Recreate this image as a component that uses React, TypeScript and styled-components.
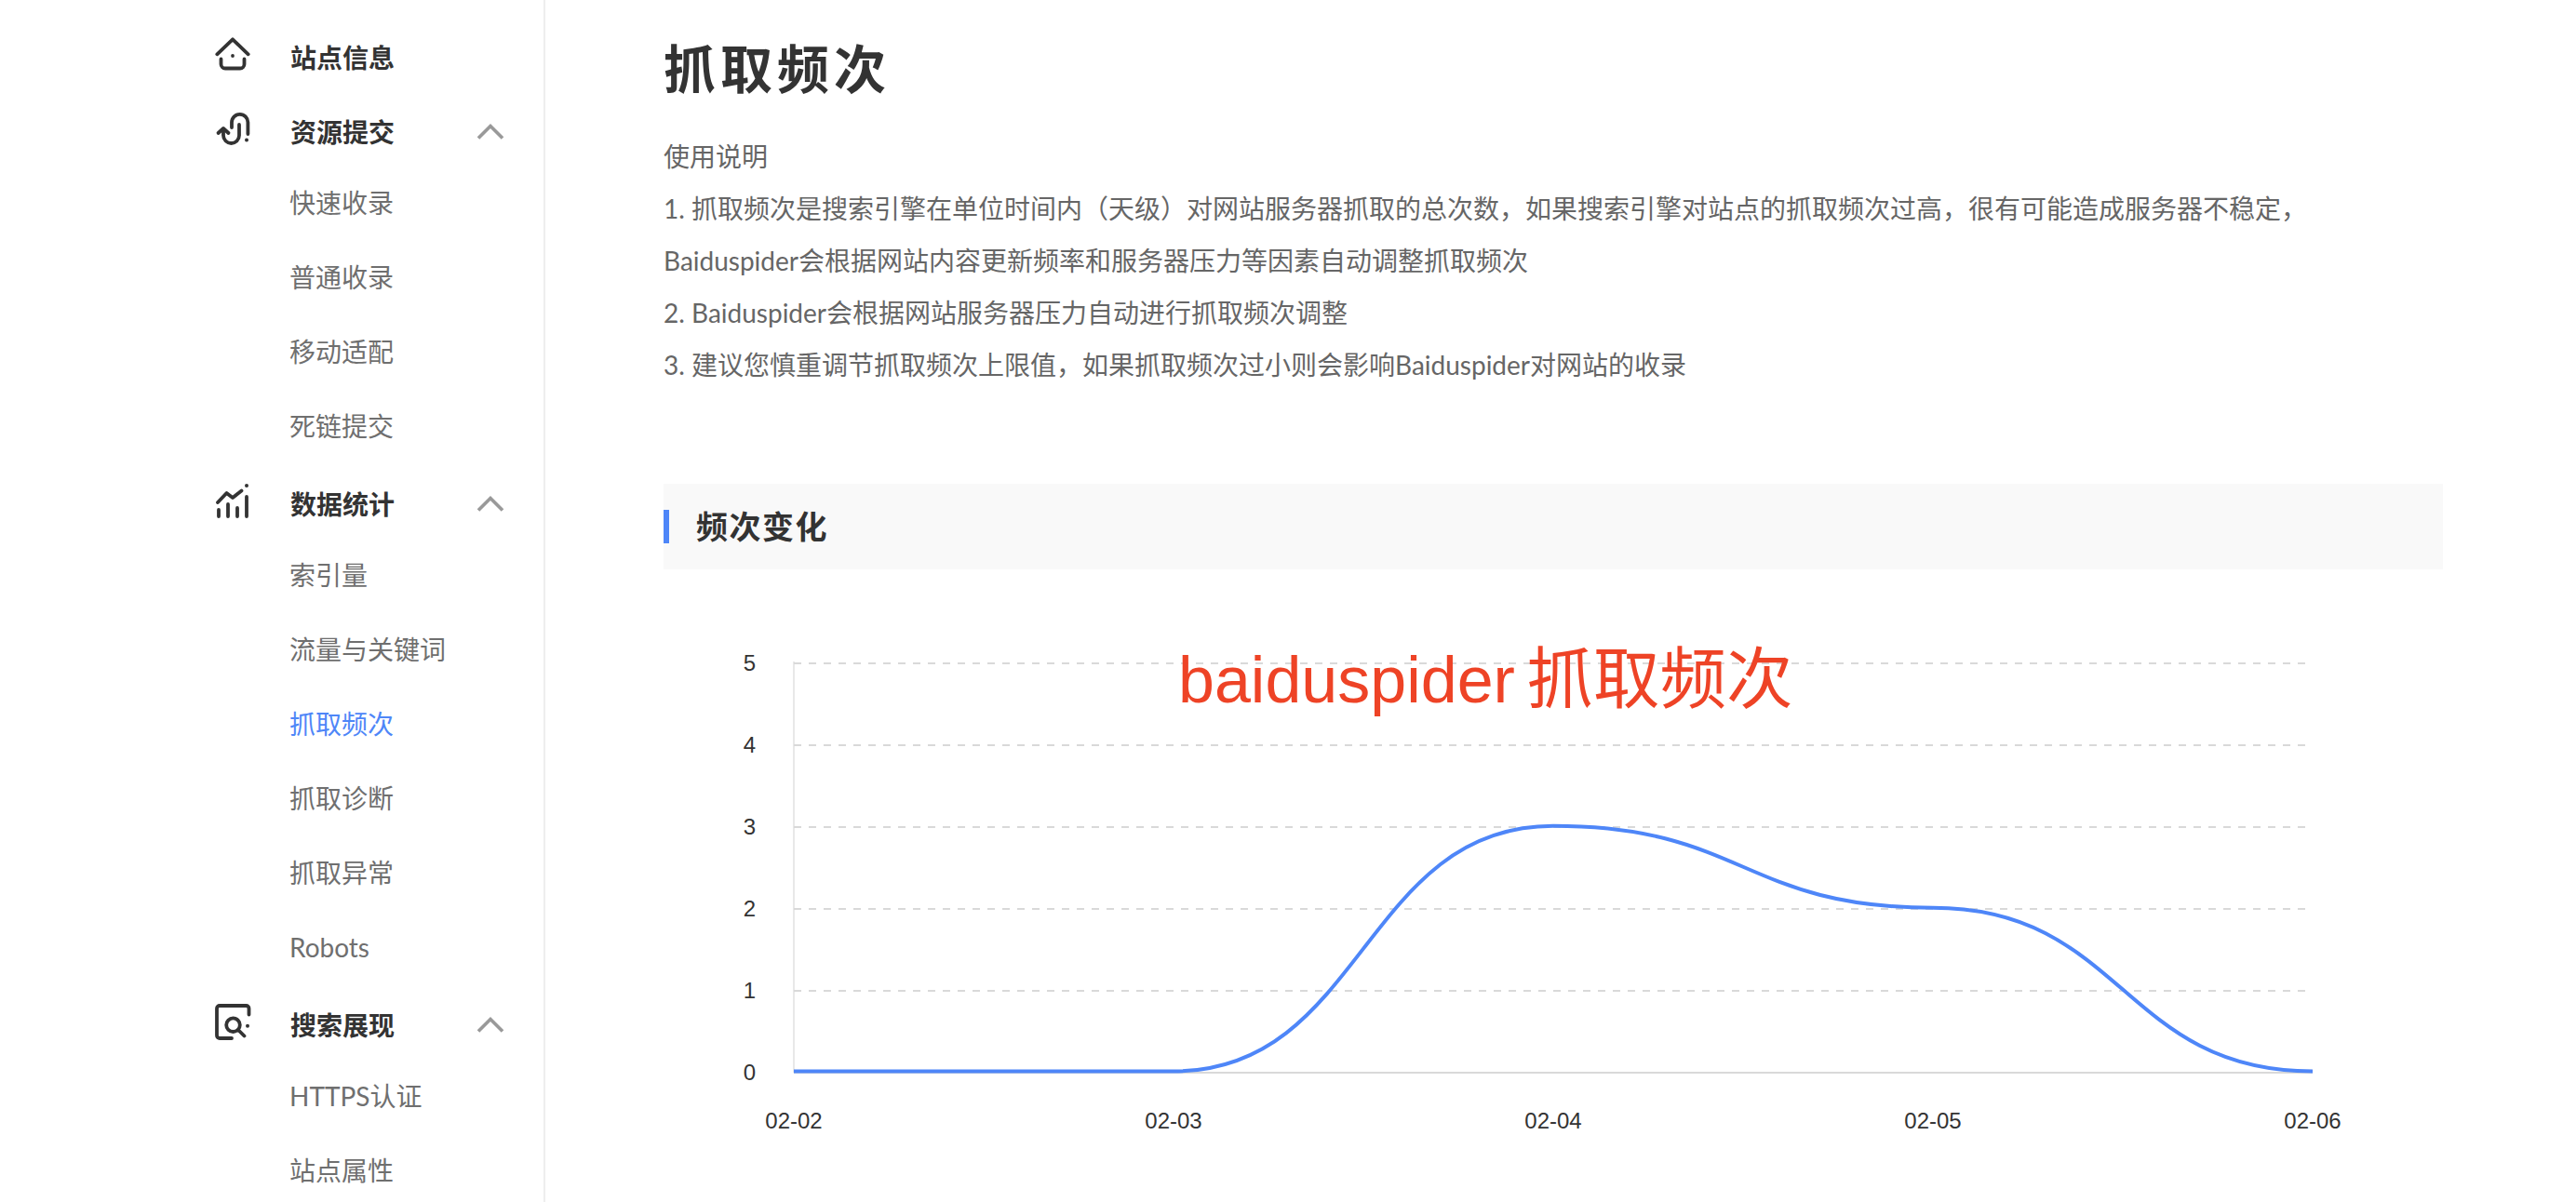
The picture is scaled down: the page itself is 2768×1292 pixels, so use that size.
import React from 'react';
import styled, { createGlobalStyle } from 'styled-components';

const GlobalStyle = createGlobalStyle`
  html, body {
    margin: 0;
    padding: 0;
    height: 1292px;
    overflow: hidden;
    background: #fff;
    font-family: "Noto Sans CJK SC", "Noto Sans", sans-serif;
  }
`;

const Page = styled.div`
  display: flex;
  width: 2768px;
  height: 1292px;
  overflow: hidden;
`;

const Sidebar = styled.nav`
  width: 584px;
  height: 1292px;
  flex-shrink: 0;
  border-right: 2px solid #eee;
`;

const Group = styled.div`
  margin-top: 8px;
  &:first-child {
    margin-top: 25px;
  }
`;

const GroupHead = styled.div`
  display: flex;
  align-items: center;
  height: 72px;
  padding-left: 225px;
  font-size: 28px;
  font-weight: 700;
  color: #333;
`;

const IconBox = styled.svg`
  width: 50px;
  height: 50px;
  margin: 0 37px 2px 0;
  fill: none;
  stroke: #333;
  stroke-width: 3.8;
  stroke-linecap: round;
  stroke-linejoin: round;
  flex-shrink: 0;
`;

const Chevron = styled.svg`
  width: 32px;
  height: 20px;
  margin-left: 87px;
  fill: none;
  stroke: #999;
  stroke-width: 3.6;
`;

const SubItem = styled.div<{ $active?: boolean }>`
  height: 80px;
  line-height: 83px;
  padding-left: 311px;
  font-family: Lato, "Noto Sans CJK SC", sans-serif;
  font-size: 28px;
  color: ${({ $active }) => ($active ? '#4e86f8' : '#6f6f6f')};
`;

const Main = styled.main`
  width: 1912px;
  margin-left: 127px;
  flex-shrink: 0;
`;

const Title = styled.h1`
  margin: 35px 0 33px;
  font-size: 56px;
  line-height: 72px;
  letter-spacing: 5px;
  font-weight: 700;
  color: #333;
`;

const Notes = styled.div`
  font-family: Lato, "Noto Sans CJK SC", sans-serif;
  font-size: 28px;
  line-height: 56px;
  color: #666;
`;

const Note = styled.p`
  margin: 0;
  white-space: nowrap;
`;

const SectionBar = styled.div`
  display: flex;
  align-items: center;
  height: 92px;
  margin-top: 100px;
  background: #f9f9f9;
`;

const SectionMark = styled.span`
  width: 6px;
  height: 36px;
  margin-right: 29px;
  background: #4e86f8;
`;

const SectionTitle = styled.h2`
  margin: 0 0 3px;
  font-size: 34px;
  letter-spacing: 1.5px;
  font-weight: 700;
  color: #333;
`;

const ChartWrap = styled.div`
  position: relative;
  height: 680px;
`;

const ChartSvg = styled.svg`
  display: block;
  width: 1912px;
  height: 680px;
`;

const AxisText = styled.text`
  font-family: "Liberation Sans", Arial, sans-serif;
  font-size: 24px;
  fill: #333;
`;

const Annotation = styled.div`
  position: absolute;
  left: 553px;
  top: 72px;
  font-family: "Liberation Sans", "Noto Sans CJK SC", sans-serif;
  font-size: 70px;
  line-height: 92px;
  word-spacing: -7px;
  color: #ee4326;
  white-space: nowrap;
`;

const AnnotationCjk = styled.span`
  font-size: 71.5px;
`;

const HomeIcon = () => (
  <IconBox viewBox="0 0 50 50">
    <path d="M8.3 23.3 25 7.3l16.7 16" />
    <path d="M12.5 28.5V34a4.5 4.5 0 0 0 4.5 4.5h16a4.5 4.5 0 0 0 4.5-4.5v-5.5" />
    <circle cx="25" cy="25" r="1.9" fill="#333" stroke="none" />
  </IconBox>
);

const SubmitIcon = () => (
  <IconBox viewBox="0 0 50 50">
    <path d="M9.5 28 15 23l5.5 5" />
    <path d="M15 24v6.5a8.5 8.5 0 0 0 17 0V19" />
    <path d="M24 22v-5.5a8.7 8.7 0 0 1 17.4 0V29" />
    <circle cx="40" cy="35.5" r="2" fill="#333" stroke="none" />
  </IconBox>
);

const StatsIcon = () => (
  <IconBox viewBox="0 0 50 50">
    <path d="M9 25 18.5 15 25 20l9.5-7.5" />
    <path d="M10 33v7M20 27v13M30 31v9M40 19v21" />
    <circle cx="40" cy="7" r="2" fill="#333" stroke="none" />
  </IconBox>
);

const SearchIcon = () => (
  <IconBox viewBox="0 0 50 50">
    <path d="M42.5 15.5V9a3 3 0 0 0-3-3H11a3 3 0 0 0-3 3v29a3 3 0 0 0 3 3h13" />
    <circle cx="25.5" cy="26.7" r="7.3" />
    <path d="m31 32 6.5 6.5" />
    <circle cx="41" cy="27.7" r="2" fill="#333" stroke="none" />
  </IconBox>
);

const ChevronUp = () => (
  <Chevron viewBox="0 0 32 20">
    <path d="M3 17.5 16 4.5l13 13" />
  </Chevron>
);

interface NavGroup {
  title: string;
  icon: React.ReactNode;
  items?: string[];
}

const navGroups: NavGroup[] = [
  { title: '站点信息', icon: <HomeIcon /> },
  { title: '资源提交', icon: <SubmitIcon />, items: ['快速收录', '普通收录', '移动适配', '死链提交'] },
  { title: '数据统计', icon: <StatsIcon />, items: ['索引量', '流量与关键词', '抓取频次', '抓取诊断', '抓取异常', 'Robots'] },
  { title: '搜索展现', icon: <SearchIcon />, items: ['HTTPS认证', '站点属性'] },
];

const notes = [
  '使用说明',
  '1. 抓取频次是搜索引擎在单位时间内（天级）对网站服务器抓取的总次数，如果搜索引擎对站点的抓取频次过高，很有可能造成服务器不稳定，',
  'Baiduspider会根据网站内容更新频率和服务器压力等因素自动调整抓取频次',
  '2. Baiduspider会根据网站服务器压力自动进行抓取频次调整',
  '3. 建议您慎重调节抓取频次上限值，如果抓取频次过小则会影响Baiduspider对网站的收录',
];

// chart geometry, in page pixels (the svg viewBox starts at the chart's page corner)
const X0 = 853;
const STEP_X = 408;
const Y0 = 1153;
const STEP_Y = 88;
const GRID_END = 2477;
const dates = ['02-02', '02-03', '02-04', '02-05', '02-06'];
const values = [0, 0, 3, 2, 0];

const px = (i: number) => X0 + i * STEP_X;
const py = (v: number) => Y0 - 1.5 - v * (STEP_Y - 0.1);

const curve = values.reduce((d, v, i) => {
  if (i === 0) return `M${px(0)} ${py(v)}`;
  const mid = px(i - 1) + STEP_X / 2;
  return `${d} C${mid} ${py(values[i - 1])} ${mid} ${py(v)} ${px(i)} ${py(v)}`;
}, '');

const Chart = () => (
  <ChartWrap>
    <ChartSvg viewBox="713 612 1912 680">
      <line x1={X0} y1={711} x2={X0} y2={Y0} stroke="#e8e8e8" strokeWidth="2" />
      {[1, 2, 3, 4, 5].map((v) => (
        <line
          key={v}
          x1={X0}
          y1={Y0 - v * STEP_Y}
          x2={GRID_END}
          y2={Y0 - v * STEP_Y}
          stroke="#d9d9d9"
          strokeWidth="2"
          strokeDasharray="8 8"
        />
      ))}
      <line x1={X0} y1={Y0} x2={px(4)} y2={Y0} stroke="#d9d9d9" strokeWidth="2" />
      {[0, 1, 2, 3, 4, 5].map((v) => (
        <AxisText key={v} x={812} y={Y0 - v * STEP_Y + 7.5} textAnchor="end">
          {v}
        </AxisText>
      ))}
      {dates.map((d, i) => (
        <AxisText key={d} x={px(i)} y={1213} textAnchor="middle">
          {d}
        </AxisText>
      ))}
      <path d={curve} fill="none" stroke="#4e86f8" strokeWidth="4" />
    </ChartSvg>
    <Annotation>
      baiduspider <AnnotationCjk>抓取频次</AnnotationCjk>
    </Annotation>
  </ChartWrap>
);

const App: React.FC = () => (
  <>
    <GlobalStyle />
    <Page>
      <Sidebar>
        {navGroups.map((group) => (
          <Group key={group.title}>
            <GroupHead>
              {group.icon}
              {group.title}
              {group.items && <ChevronUp />}
            </GroupHead>
            {group.items?.map((item) => (
              <SubItem key={item} $active={item === '抓取频次'}>
                {item}
              </SubItem>
            ))}
          </Group>
        ))}
      </Sidebar>
      <Main>
        <Title>抓取频次</Title>
        <Notes>
          {notes.map((n) => (
            <Note key={n}>{n}</Note>
          ))}
        </Notes>
        <SectionBar>
          <SectionMark />
          <SectionTitle>频次变化</SectionTitle>
        </SectionBar>
        <Chart />
      </Main>
    </Page>
  </>
);

export default App;
